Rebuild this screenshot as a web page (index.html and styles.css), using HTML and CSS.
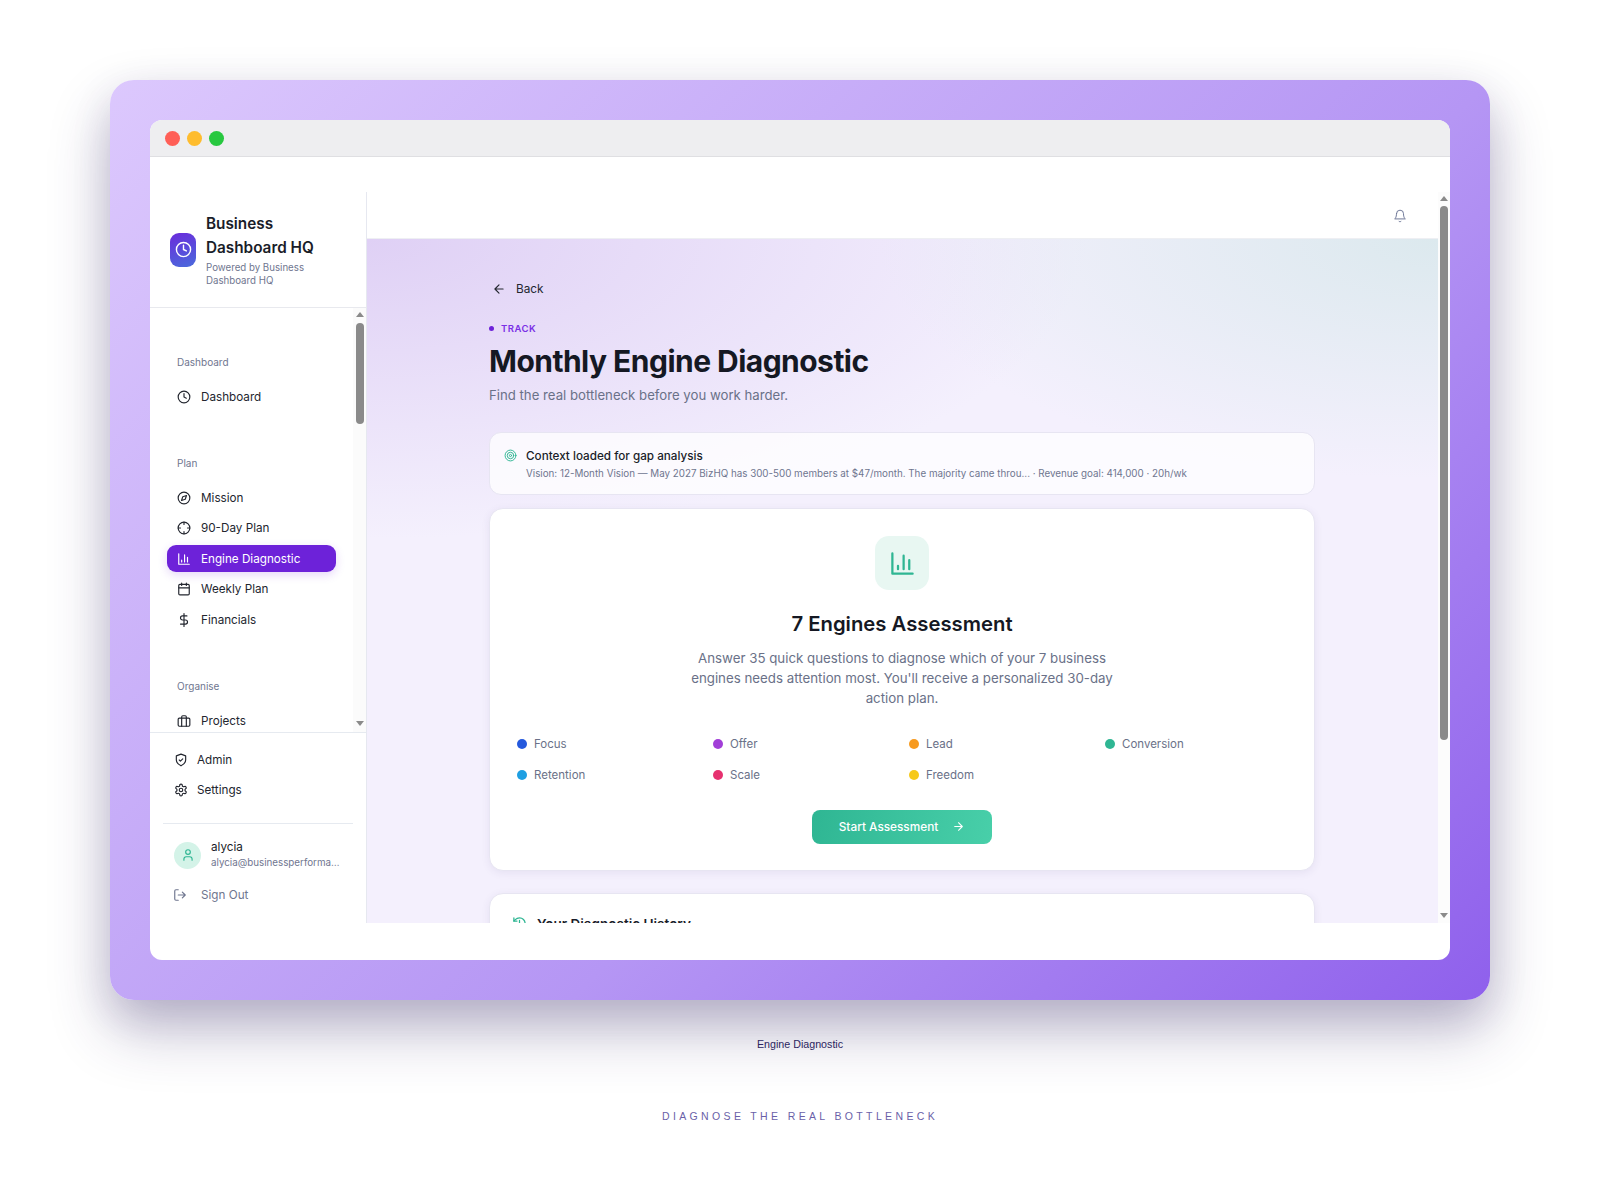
FILE: index.html
```html
<!DOCTYPE html>
<html lang="en">

<head>
    <meta charset="UTF-8">
    <meta name="viewport" content="width=device-width, initial-scale=1.0">
    <title>Engine Diagnostic</title>
    <link rel="stylesheet" href="styles.css">
</head>

<body>
    <div class="frame">
        <div class="window">
            <div class="titlebar">
                <span class="light light-red"></span>
                <span class="light light-yellow"></span>
                <span class="light light-green"></span>
            </div>
            <div class="app">
                <aside class="sidebar">
                    <div class="brand">
                        <div class="brand-logo">
                            <svg class="icon" viewBox="0 0 24 24"><circle cx="12" cy="12" r="10"/><polyline points="12 6 12 12 16 14"/></svg>
                        </div>
                        <div>
                            <div class="brand-name">Business Dashboard HQ</div>
                            <div class="brand-sub">Powered by Business Dashboard HQ</div>
                        </div>
                    </div>
                    <div class="nav-wrap">
                        <nav class="nav">
                            <div class="nav-label">Dashboard</div>
                            <a class="nav-item">
                                <svg class="icon" viewBox="0 0 24 24"><circle cx="12" cy="12" r="10"/><polyline points="12 6 12 12 16 14"/></svg>
                                Dashboard
                            </a>
                            <div class="nav-label nav-label-gap">Plan</div>
                            <a class="nav-item">
                                <svg class="icon" viewBox="0 0 24 24"><circle cx="12" cy="12" r="10"/><polygon points="16.24 7.76 14.12 14.12 7.76 16.24 9.88 9.88"/></svg>
                                Mission
                            </a>
                            <a class="nav-item">
                                <svg class="icon" viewBox="0 0 24 24"><circle cx="12" cy="12" r="10"/><path d="M22 12h-4M6 12H2M12 6V2M12 22v-4"/></svg>
                                90-Day Plan
                            </a>
                            <a class="nav-item active">
                                <svg class="icon" viewBox="0 0 24 24"><path d="M3 3v18h18M18 17V9M13 17V5M8 17v-3"/></svg>
                                Engine Diagnostic
                            </a>
                            <a class="nav-item">
                                <svg class="icon" viewBox="0 0 24 24"><rect x="3" y="4" width="18" height="18" rx="2"/><path d="M16 2v4M8 2v4M3 10h18"/></svg>
                                Weekly Plan
                            </a>
                            <a class="nav-item">
                                <svg class="icon" viewBox="0 0 24 24"><path d="M12 1v22M17 5H9.5a3.5 3.5 0 0 0 0 7h5a3.5 3.5 0 0 1 0 7H6"/></svg>
                                Financials
                            </a>
                            <div class="nav-label nav-label-gap">Organise</div>
                            <a class="nav-item">
                                <svg class="icon" viewBox="0 0 24 24"><rect x="2" y="7" width="20" height="14" rx="2"/><path d="M16 21V5a2 2 0 0 0-2-2h-4a2 2 0 0 0-2 2v16"/></svg>
                                Projects
                            </a>
                        </nav>
                        <div class="scrollbar scrollbar-nav">
                            <span class="arrow-up"></span>
                            <span class="thumb"></span>
                            <span class="arrow-down"></span>
                        </div>
                    </div>
                    <div class="side-foot">
                        <a class="nav-item foot-item">
                            <svg class="icon" viewBox="0 0 24 24"><path d="M12 22s8-4 8-10V5l-8-3-8 3v7c0 6 8 10 8 10"/><path d="m9 12 2 2 4-4"/></svg>
                            Admin
                        </a>
                        <a class="nav-item foot-item">
                            <svg class="icon" viewBox="0 0 24 24"><path d="M12.22 2h-.44a2 2 0 0 0-2 2v.18a2 2 0 0 1-1 1.73l-.43.25a2 2 0 0 1-2 0l-.15-.08a2 2 0 0 0-2.73.73l-.22.38a2 2 0 0 0 .73 2.73l.15.1a2 2 0 0 1 1 1.72v.51a2 2 0 0 1-1 1.74l-.15.09a2 2 0 0 0-.73 2.73l.22.38a2 2 0 0 0 2.73.73l.15-.08a2 2 0 0 1 2 0l.43.25a2 2 0 0 1 1 1.73V20a2 2 0 0 0 2 2h.44a2 2 0 0 0 2-2v-.18a2 2 0 0 1 1-1.73l.43-.25a2 2 0 0 1 2 0l.15.08a2 2 0 0 0 2.73-.73l.22-.39a2 2 0 0 0-.73-2.73l-.15-.08a2 2 0 0 1-1-1.74v-.5a2 2 0 0 1 1-1.74l.15-.09a2 2 0 0 0 .73-2.73l-.22-.38a2 2 0 0 0-2.73-.73l-.15.08a2 2 0 0 1-2 0l-.43-.25a2 2 0 0 1-1-1.73V4a2 2 0 0 0-2-2z"/><circle cx="12" cy="12" r="3"/></svg>
                            Settings
                        </a>
                        <div class="user">
                            <div class="avatar">
                                <svg class="icon" viewBox="0 0 24 24"><path d="M19 21v-2a4 4 0 0 0-4-4H9a4 4 0 0 0-4 4v2"/><circle cx="12" cy="7" r="4"/></svg>
                            </div>
                            <div class="user-info">
                                <div class="user-name">alycia</div>
                                <div class="user-mail">alycia@businessperformance.com</div>
                            </div>
                        </div>
                        <a class="nav-item signout">
                            <svg class="icon" viewBox="0 0 24 24"><path d="M9 21H5a2 2 0 0 1-2-2V5a2 2 0 0 1 2-2h4"/><path d="m16 17 5-5-5-5M21 12H9"/></svg>
                            Sign Out
                        </a>
                    </div>
                </aside>
                <div class="main-wrap">
                    <div class="main-col">
                        <header class="topbar">
                            <svg class="icon bell" viewBox="0 0 24 24"><path d="M6 8a6 6 0 0 1 12 0c0 7 3 9 3 9H3s3-2 3-9"/><path d="M10.3 21a1.94 1.94 0 0 0 3.4 0"/></svg>
                        </header>
                        <main class="main">
                            <div class="content">
                                <a class="back">
                                    <svg class="icon" viewBox="0 0 24 24"><path d="m12 19-7-7 7-7M19 12H5"/></svg>
                                    Back
                                </a>
                                <div class="eyebrow"><span class="eyebrow-dot"></span>TRACK</div>
                                <h1>Monthly Engine Diagnostic</h1>
                                <p class="subtitle">Find the real bottleneck before you work harder.</p>

                                <section class="context">
                                    <svg class="icon" viewBox="0 0 24 24"><circle cx="12" cy="12" r="10"/><circle cx="12" cy="12" r="6"/><circle cx="12" cy="12" r="2"/></svg>
                                    <div>
                                        <div class="context-title">Context loaded for gap analysis</div>
                                        <div class="context-text">Vision: 12-Month Vision — May 2027 BizHQ has 300-500 members at $47/month. The majority came throu... · Revenue goal: 414,000 · 20h/wk</div>
                                    </div>
                                </section>

                                <section class="card assess">
                                    <div class="assess-icon">
                                        <svg class="icon" viewBox="0 0 24 24"><path d="M3 3v18h18M18 17V9M13 17V5M8 17v-3"/></svg>
                                    </div>
                                    <h2>7 Engines Assessment</h2>
                                    <p class="assess-text">Answer 35 quick questions to diagnose which of your 7 business engines needs attention most. You'll receive a personalized 30-day action plan.</p>
                                    <div class="engines">
                                        <div class="engine"><span class="dot dot-focus"></span>Focus</div>
                                        <div class="engine"><span class="dot dot-offer"></span>Offer</div>
                                        <div class="engine"><span class="dot dot-lead"></span>Lead</div>
                                        <div class="engine"><span class="dot dot-conversion"></span>Conversion</div>
                                        <div class="engine"><span class="dot dot-retention"></span>Retention</div>
                                        <div class="engine"><span class="dot dot-scale"></span>Scale</div>
                                        <div class="engine"><span class="dot dot-freedom"></span>Freedom</div>
                                    </div>
                                    <a class="start-btn">
                                        Start Assessment
                                        <svg class="icon" viewBox="0 0 24 24"><path d="M5 12h14M12 5l7 7-7 7"/></svg>
                                    </a>
                                </section>

                                <section class="card history">
                                    <svg class="icon" viewBox="0 0 24 24"><path d="M3 12a9 9 0 1 0 9-9 9.75 9.75 0 0 0-6.74 2.74L3 8"/><path d="M3 3v5h5M12 7v5l4 2"/></svg>
                                    <h3>Your Diagnostic History</h3>
                                </section>
                            </div>
                        </main>
                    </div>
                    <div class="scrollbar scrollbar-main">
                        <span class="arrow-up"></span>
                        <span class="thumb"></span>
                        <span class="arrow-down"></span>
                    </div>
                </div>
            </div>
        </div>
    </div>
    <div class="caption">Engine Diagnostic</div>
    <div class="tagline">DIAGNOSE THE REAL BOTTLENECK</div>
</body>

</html>
```

FILE: styles.css
```css
* {
    box-sizing: border-box;
}

body {
    margin: 0;
    height: 1200px;
    overflow: hidden;
    padding-top: 80px;
    background-color: white;
    font-family: "Inter", Arial, sans-serif;
    color: #1a1d29;
}

.icon {
    display: block;
    flex-shrink: 0;
    width: 14px;
    height: 14px;
    fill: none;
    stroke: currentColor;
    stroke-width: 2;
    stroke-linecap: round;
    stroke-linejoin: round;
}

/* outer purple frame */
.frame {
    width: 1380px;
    height: 920px;
    margin: 0 auto 0 110px;
    padding: 40px;
    border-radius: 24px;
    background: linear-gradient(135deg, #dcc8fd 0%, #b596f4 60%, #8f60ec 100%);
    box-shadow: 0 30px 60px rgba(50, 35, 100, 0.3), 0 14px 40px rgba(50, 35, 100, 0.12);
}

.window {
    display: flex;
    flex-direction: column;
    height: 840px;
    background-color: white;
    border-radius: 12px;
    overflow: hidden;
}

.titlebar {
    display: flex;
    align-items: center;
    gap: 7px;
    height: 37px;
    padding-left: 15px;
    background-color: #eeeef0;
    border-bottom: 1px solid #dfdfe2;
}

.light {
    width: 15px;
    height: 15px;
    border-radius: 50%;
}

.light-red {
    background-color: #ff5f57;
}

.light-yellow {
    background-color: #febc2e;
}

.light-green {
    background-color: #28c840;
}

.app {
    display: flex;
    height: 731px;
    margin-top: 35px;
}

/* sidebar */
.sidebar {
    display: flex;
    flex-direction: column;
    width: 217px;
    flex-shrink: 0;
    border-right: 1px solid #e6e8f0;
}

.brand {
    display: flex;
    align-items: center;
    gap: 10px;
    height: 116px;
    padding: 0 16px 0 20px;
    border-bottom: 1px solid #e8e9ee;
}

.brand-logo {
    display: flex;
    align-items: center;
    justify-content: center;
    flex-shrink: 0;
    width: 26px;
    height: 34px;
    border-radius: 9px;
    color: white;
    background: linear-gradient(160deg, #6a2bdb, #4a6bdc);
}

.brand-logo .icon {
    width: 17px;
    height: 17px;
}

.brand-name {
    font-size: 15.3px;
    font-weight: 600;
    line-height: 23.5px;
}

.brand-sub {
    font-size: 9.7px;
    line-height: 13px;
    margin-top: 2px;
    color: #6f768f;
}

.nav-wrap {
    display: flex;
    flex: 1;
    min-height: 0;
}

.nav {
    flex: 1;
    min-width: 0;
    overflow: hidden;
    padding: 47px 0 0 17px;
}

.nav-label {
    height: 14px;
    margin-bottom: 14px;
    padding-left: 10px;
    font-size: 10px;
    line-height: 14px;
    color: #6f768f;
}

.nav-label-gap {
    margin-top: 46px;
}

.nav-item {
    display: flex;
    align-items: center;
    gap: 10px;
    width: 169px;
    height: 27px;
    margin-bottom: 3.6px;
    padding-left: 10px;
    border-radius: 9px;
    font-size: 11.7px;
    color: #23262f;
}

.nav-item.active {
    color: white;
    background-color: #6d22d9;
    box-shadow: 0 3px 10px rgba(109, 34, 217, 0.18);
}

/* little scrollbars drawn by hand, the screenshot has them */
.scrollbar {
    display: flex;
    flex-direction: column;
    align-items: center;
    flex-shrink: 0;
    width: 13px;
    background-color: #fbfbfb;
}

.scrollbar-nav {
    padding: 4px 0 6px;
}

.scrollbar-nav .thumb {
    height: 101px;
    margin-top: 6px;
}

.scrollbar-main {
    width: 12px;
    padding: 4px 0 5px;
    background-color: #fcfcfc;
}

.scrollbar-main .thumb {
    height: 534px;
    margin-top: 5px;
}

.thumb {
    width: 8px;
    border-radius: 4px;
    background-color: #8a8a8a;
}

.arrow-up {
    width: 0;
    height: 0;
    border-left: 4px solid transparent;
    border-right: 4px solid transparent;
    border-bottom: 5px solid #8a8a8a;
}

.arrow-down {
    width: 0;
    height: 0;
    margin-top: auto;
    border-left: 4px solid transparent;
    border-right: 4px solid transparent;
    border-top: 5px solid #8a8a8a;
}

.side-foot {
    height: 191px;
    padding: 13px 13px 0 13px;
    border-top: 1px solid #e6eaf0;
}

.foot-item {
    gap: 9px;
    margin-bottom: 3.2px;
    padding-left: 11px;
}

.user {
    display: flex;
    align-items: center;
    gap: 10px;
    margin-top: 19.5px;
    padding: 16px 0 0 11px;
    border-top: 1px solid #e6eaf0;
}

.avatar {
    display: flex;
    align-items: center;
    justify-content: center;
    flex-shrink: 0;
    width: 27px;
    height: 27px;
    border-radius: 50%;
    color: #2fb693;
    background-color: #d4f3e8;
}

.avatar .icon {
    width: 14px;
    height: 14px;
}

.user-info {
    min-width: 0;
    flex: 1;
}

.user-name {
    font-size: 11.7px;
    line-height: 14px;
}

.user-mail {
    overflow: hidden;
    width: 132px;
    white-space: nowrap;
    text-overflow: ellipsis;
    font-size: 9.8px;
    line-height: 17px;
    color: #6f768f;
}

.signout {
    gap: 14px;
    margin-top: 11px;
    color: #6f768f;
}

/* main column */
.main-wrap {
    display: flex;
    flex: 1;
    min-width: 0;
}

.main-col {
    display: flex;
    flex-direction: column;
    flex: 1;
    min-width: 0;
}

.topbar {
    display: flex;
    align-items: center;
    justify-content: flex-end;
    height: 47px;
    padding: 0 31px 0 0;
    border-bottom: 1px solid #eeeff3;
    color: #667091;
}

.bell {
    width: 14px;
    height: 14px;
    stroke-width: 1.6;
    margin-top: 1px;
}

.main {
    flex: 1;
    min-height: 0;
    overflow: hidden;
    background:
        radial-gradient(ellipse 560px 240px at 100% 0, #dce9ee 0%, rgba(220, 233, 238, 0) 100%),
        radial-gradient(ellipse 720px 300px at 0 0, #dfd0f5 0%, rgba(223, 208, 245, 0) 100%),
        #f4f0fd;
}

.content {
    width: 826px;
    margin-left: 122px;
    padding-top: 42px;
}

.back {
    display: flex;
    align-items: center;
    gap: 10px;
    height: 16px;
    padding-left: 3px;
    font-size: 11.8px;
    color: #23262f;
}

.back .icon {
    width: 14px;
    height: 14px;
}

.eyebrow {
    display: flex;
    align-items: center;
    gap: 7px;
    height: 14px;
    margin-top: 24px;
    font-size: 9.5px;
    font-weight: 600;
    letter-spacing: 0.05em;
    color: #7a30e6;
}

.eyebrow-dot {
    width: 5px;
    height: 5px;
    border-radius: 50%;
    background-color: #6d22d9;
}

h1 {
    margin: 7px 0 0;
    font-size: 30px;
    font-weight: 700;
    line-height: 38px;
    letter-spacing: -0.53px;
    color: #151823;
}

.subtitle {
    margin: 5px 0 0;
    font-size: 13.2px;
    line-height: 20px;
    color: #6a7188;
}

.context {
    display: flex;
    gap: 9px;
    height: 63px;
    margin-top: 27px;
    padding: 15px 14px;
    border: 1px solid #e7e5f2;
    border-radius: 12px;
    background-color: rgba(255, 255, 255, 0.75);
}

.context .icon {
    width: 13px;
    height: 13px;
    margin-top: 1px;
    color: #2fb693;
    stroke-width: 1.8;
}

.context-title {
    font-size: 11.7px;
    line-height: 16px;
    font-weight: 500;
}

.context-text {
    margin-top: 3px;
    font-size: 9.8px;
    line-height: 14px;
    color: #6f768f;
}

.card {
    border: 1px solid #e7e5f2;
    border-radius: 14px;
    background-color: white;
    box-shadow: 0 2px 8px rgba(60, 50, 110, 0.08);
}

.assess {
    display: flex;
    flex-direction: column;
    align-items: center;
    height: 363px;
    margin-top: 13px;
    padding: 27px 27px 0;
}

.assess-icon {
    display: flex;
    align-items: center;
    justify-content: center;
    width: 54px;
    height: 54px;
    border-radius: 14px;
    color: #2fb693;
    background-color: #e8f7f2;
}

.assess-icon .icon {
    width: 27px;
    height: 27px;
}

h2 {
    margin: 20px 0 0;
    font-size: 20.3px;
    font-weight: 600;
    line-height: 28px;
    color: #151823;
}

.assess-text {
    width: 430px;
    margin: 10px 0 0;
    text-align: center;
    font-size: 13.3px;
    line-height: 20.2px;
    color: #6a7188;
}

.engines {
    display: grid;
    grid-template-columns: repeat(4, 196px);
    row-gap: 12px;
    width: 100%;
    margin-top: 26px;
}

.engine {
    display: flex;
    align-items: center;
    gap: 7px;
    height: 19px;
    font-size: 11.5px;
    color: #6a7188;
}

.dot {
    width: 10px;
    height: 10px;
    border-radius: 50%;
}

.dot-focus {
    background-color: #2559dd;
}

.dot-offer {
    background-color: #a23fd8;
}

.dot-lead {
    background-color: #f79a1e;
}

.dot-conversion {
    background-color: #2fb693;
}

.dot-retention {
    background-color: #1e9fe2;
}

.dot-scale {
    background-color: #e6316f;
}

.dot-freedom {
    background-color: #f6c91a;
}

.start-btn {
    display: flex;
    align-items: center;
    justify-content: center;
    gap: 14px;
    width: 180px;
    height: 34px;
    margin-top: 25px;
    border-radius: 8px;
    font-size: 11.8px;
    font-weight: 500;
    color: white;
    background: linear-gradient(100deg, #2fb693, #48cfa9);
}

.start-btn .icon {
    width: 13px;
    height: 13px;
}

.history {
    display: flex;
    gap: 10px;
    margin-top: 22px;
    padding: 22px 22px;
}

.history .icon {
    width: 15px;
    height: 15px;
    color: #2fb693;
}

h3 {
    margin: 0;
    font-size: 13.5px;
    font-weight: 600;
    line-height: 16px;
}

/* texts under the frame */
.caption {
    margin-top: 37px;
    text-align: center;
    font-family: "Liberation Sans", Arial, sans-serif;
    font-size: 10.7px;
    line-height: 14px;
    color: #2c2560;
}

.tagline {
    margin-top: 58px;
    text-align: center;
    font-family: "Liberation Sans", Arial, sans-serif;
    font-size: 10.5px;
    line-height: 14px;
    letter-spacing: 0.32em;
    color: #6a5fa8;
}
```
